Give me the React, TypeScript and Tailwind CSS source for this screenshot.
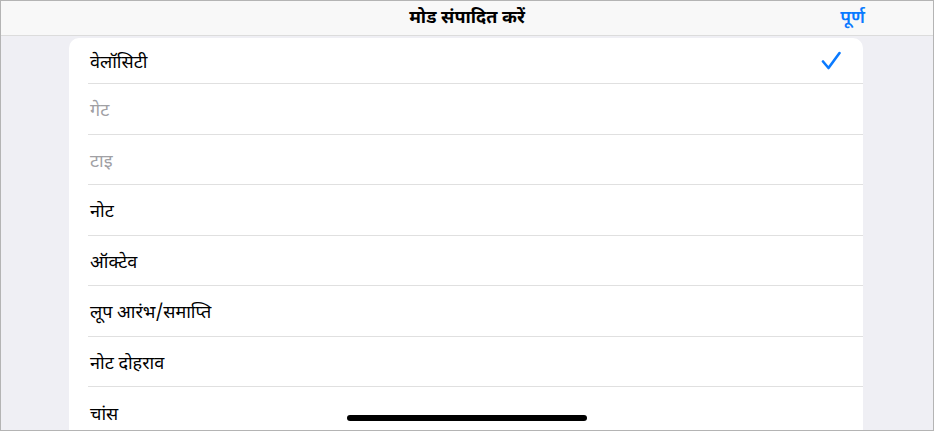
import React from "react";

const rows: { label: string; muted?: boolean; checked?: boolean }[] = [
  { label: "वेलॉसिटी", checked: true },
  { label: "गेट", muted: true },
  { label: "टाइ", muted: true },
  { label: "नोट" },
  { label: "ऑक्टेव" },
  { label: "लूप आरंभ/समाप्ति" },
  { label: "नोट दोहराव" },
  { label: "चांस" },
];

export default function App() {
  return (
    <div
      className="relative w-[934px] h-[431px] overflow-hidden border border-[#b4b4b4] bg-[#efeff4] flex flex-col"
      style={{ fontFamily: '"Noto Sans Devanagari", "Noto Sans", "Liberation Sans", sans-serif' }}
    >
      <div className="h-[35px] shrink-0 bg-[#f8f8f8] border-b border-[#dcdcdc] flex items-center relative">
        <div className="absolute inset-0 pt-[2px] flex items-center justify-center text-[18px] font-bold text-black leading-none">
          मोड संपादित करें
        </div>
        <div className="ml-auto mr-[68px] pt-[2px] text-[18px] font-semibold text-[#0a7aff] leading-none relative">
          पूर्ण
        </div>
      </div>
      <div className="pt-[2px] pl-[68px] pr-[70px] flex-1">
        <div className="bg-white rounded-t-[10px] h-full">
          {rows.map((r, i) => (
            <div
              key={r.label}
              className={`flex items-center pl-[19px] ${i === 0 ? "h-[46px]" : "h-[50.5px]"}`}
            >
              <div
                className={`flex-1 h-full flex items-center pr-[22px] ${
                  i < rows.length - 1 ? "border-b border-[#e0e0e0]" : ""
                }`}
              >
                <span
                  className={`pl-[2px] pt-[7px] text-[18px] leading-none ${
                    r.muted ? "text-[#a0a0a4]" : "text-black"
                  }`}
                >
                  {r.label}
                </span>
                {r.checked && (
                  <svg className="ml-auto" width="20" height="20" viewBox="0 0 20 20">
                    <path
                      d="M2 10.5 L7.5 17 L18.5 2"
                      fill="none"
                      stroke="#0a7aff"
                      strokeWidth="2.6"
                      strokeLinecap="round"
                      strokeLinejoin="round"
                    />
                  </svg>
                )}
              </div>
            </div>
          ))}
        </div>
      </div>
      <div className="absolute left-[346px] top-[414px] w-[240px] h-[6px] rounded-full bg-black" />
    </div>
  );
}
